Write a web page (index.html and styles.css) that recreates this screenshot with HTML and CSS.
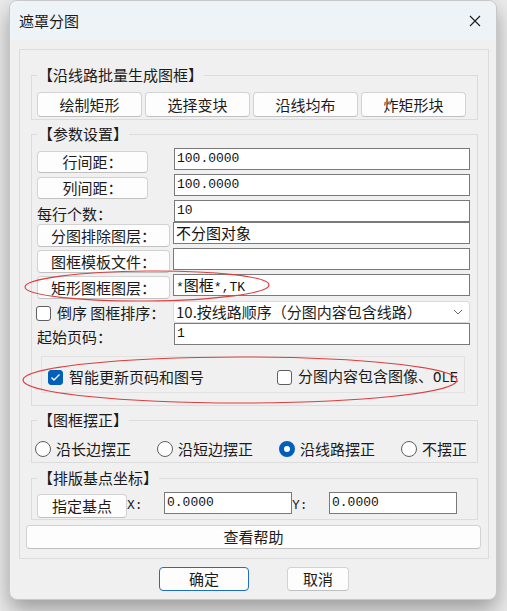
FILE: index.html
```html
<!DOCTYPE html>
<html lang="zh-CN">
<head>
    <meta charset="UTF-8">
    <title>遮罩分图</title>
    <link rel="stylesheet" href="styles.css">
</head>
<body>
    <div class="window">
        <div class="titlebar">
            <span class="title">遮罩分图</span>
            <svg class="close" width="12" height="12" viewBox="0 0 12 12">
                <path d="M1 1L11 11M11 1L1 11" stroke="#1b1b1b" stroke-width="1.1" fill="none"/>
            </svg>
        </div>

        <div class="client">
            <div class="frame">
                <div class="group g-batch">
                    <div class="group-title">【沿线路批量生成图框】</div>
                    <div class="btn-row">
                        <button class="btn">绘制矩形</button>
                        <button class="btn">选择变块</button>
                        <button class="btn">沿线均布</button>
                        <button class="btn">炸矩形块</button>
                    </div>
                </div>

                <div class="group g-params">
                    <div class="group-title">【参数设置】</div>
                    <div class="rows">
                        <div class="row r-26">
                            <button class="btn btn-label">行间距：</button>
                            <div class="field">100.0000</div>
                        </div>
                        <div class="row r-26">
                            <button class="btn btn-label">列间距：</button>
                            <div class="field">100.0000</div>
                        </div>
                        <div class="row r-22">
                            <span class="label">每行个数：</span>
                            <div class="field">10</div>
                        </div>
                        <div class="row r-26">
                            <button class="btn btn-label btn-wide">分图排除图层：</button>
                            <div class="field field-cjk narrow">不分图对象</div>
                        </div>
                        <div class="row r-26">
                            <button class="btn btn-label btn-wide">图框模板文件：</button>
                            <div class="field narrow"></div>
                        </div>
                        <div class="row r-27">
                            <button class="btn btn-label btn-wide">矩形图框图层：</button>
                            <div class="field narrow">*<span class="cjk">图框</span>*,TK</div>
                        </div>
                        <div class="row r-22">
                            <label class="check">
                                <span class="box"></span>
                                <span>倒序 图框排序：</span>
                            </label>
                            <div class="select narrow">
                                <span>10.按线路顺序（分图内容包含线路）</span>
                                <svg width="10" height="6" viewBox="0 0 10 6">
                                    <path d="M1 1L5 5L9 1" stroke="#6a6a6a" fill="none"/>
                                </svg>
                            </div>
                        </div>
                        <div class="row r-22">
                            <span class="label">起始页码：</span>
                            <div class="field">1</div>
                        </div>
                    </div>

                    <div class="subgroup">
                        <label class="check">
                            <span class="box checked">
                                <svg width="11" height="9" viewBox="0 0 11 9">
                                    <path d="M1.5 4.5L4 7L9.5 1.5" stroke="#fff" stroke-width="1.4" fill="none"/>
                                </svg>
                            </span>
                            <span>智能更新页码和图号</span>
                        </label>
                        <label class="check">
                            <span class="box"></span>
                            <span>分图内容包含图像、<span class="mono">OLE</span></span>
                        </label>
                    </div>
                </div>

                <div class="group g-align">
                    <div class="group-title">【图框摆正】</div>
                    <div class="radio-row">
                        <label class="radio"><span class="dot"></span>沿长边摆正</label>
                        <label class="radio"><span class="dot"></span>沿短边摆正</label>
                        <label class="radio"><span class="dot on"></span>沿线路摆正</label>
                        <label class="radio"><span class="dot"></span>不摆正</label>
                    </div>
                </div>

                <div class="group g-base">
                    <div class="group-title">【排版基点坐标】</div>
                    <div class="coord-row">
                        <button class="btn btn-base">指定基点</button>
                        <span class="axis">X:</span>
                        <div class="field coord">0.0000</div>
                        <span class="axis">Y:</span>
                        <div class="field coord">0.0000</div>
                    </div>
                </div>

                <button class="btn btn-help">查看帮助</button>
            </div>

            <div class="actions">
                <button class="btn btn-ok">确定</button>
                <button class="btn btn-cancel">取消</button>
            </div>
        </div>
    </div>

    <!-- hand-drawn red markers over the dialog -->
    <svg class="marks" width="507" height="611" viewBox="0 0 507 611">
        <ellipse cx="147" cy="286" rx="122" ry="15" transform="rotate(-0.5 147 286)"/>
        <ellipse cx="240" cy="380" rx="217" ry="23"/>
    </svg>
</body>
</html>
```

FILE: styles.css
```css
:root {
    --client-bg: #f0f0f0;
    --title-bg: #eef3f8;
    --line: #dcdcdc;
    --text: #1b1b1b;
    --accent: #005fb8;
}

body {
    margin: 0;
    width: 507px;
    height: 611px;
    overflow: hidden;
    background: #ececec;
    font-family: "Noto Sans CJK SC", sans-serif;
    font-size: 15px;
    color: var(--text);
    position: relative;
}

.window {
    margin-left: 9px;
    width: 488px;
    height: 600px;
    box-sizing: border-box;
    border: 1px solid #c8c8c8;
    border-radius: 8px;
    overflow: hidden;
    background: var(--client-bg);
    box-shadow: 0 10px 22px rgba(0, 0, 0, 0.35);
}

.titlebar {
    height: 39px;
    background: var(--title-bg);
    display: flex;
    align-items: center;
    justify-content: space-between;
    padding: 0 15px 0 9px;
}

.title {
    font-size: 15px;
    line-height: 20px;
}

.client {
    padding-top: 9px;
}

.frame {
    margin-left: 9px;
    width: 470px;
    height: 510px;
    box-sizing: border-box;
    border: 1px solid var(--line);
    display: flex;
    flex-direction: column;
}

.group {
    margin-left: 11px;
    width: 447px;
    box-sizing: border-box;
    border: 1px solid var(--line);
}

.group-title {
    width: fit-content;
    margin: -11px 0 0 5px;
    padding: 0 1px;
    background: var(--client-bg);
    line-height: 20px;
    height: 20px;
    white-space: nowrap;
}

.btn {
    font-family: inherit;
    font-size: 15px;
    color: var(--text);
    background: #fdfdfd;
    border: 1px solid #d2d2d2;
    border-bottom-color: #c0c0c0;
    border-radius: 4px;
    padding: 0;
    line-height: 20px;
    box-sizing: border-box;
}

/* batch group */
.g-batch {
    margin-top: 25px;
    padding-bottom: 2px;
}

.btn-row {
    margin: 7px 0 0 5px;
    display: flex;
    gap: 3px;
}

.btn-row .btn {
    width: 105px;
    height: 25px;
}

/* params group */
.g-params {
    margin-top: 14px;
    padding-bottom: 12px;
}

.rows {
    margin-top: 4px;
    padding-left: 5px;
}

.row {
    display: grid;
    grid-template-columns: 137px 296px;
    align-items: start;
}

.r-22 { height: 22px; }
.r-26 { height: 26px; }
.r-27 { height: 27px; }

.btn-label {
    width: 111px;
    height: 22px;
    margin-top: 3px;
}

.btn-wide {
    width: 133px;
    height: 23px;
    margin-top: 2px;
}

.label {
    line-height: 20px;
    margin-top: 4px;
}

.field {
    height: 22px;
    box-sizing: border-box;
    border: 1px solid #7a7a7a;
    background: #fff;
    font-family: "Liberation Mono", "Noto Sans CJK SC", monospace;
    font-size: 13px;
    line-height: 20px;
    padding-left: 2px;
    color: #111;
    white-space: nowrap;
    overflow: hidden;
}

.field .cjk,
.field-cjk {
    font-family: "Noto Sans CJK SC", sans-serif;
    font-size: 15px;
}

.narrow {
    margin-left: -1px;
}

.select {
    height: 22px;
    box-sizing: border-box;
    border: 1px solid #dadada;
    border-radius: 3px;
    background: #fff;
    display: flex;
    align-items: center;
    justify-content: space-between;
    padding: 0 6px 0 2px;
    line-height: 20px;
    white-space: nowrap;
}

.check {
    display: flex;
    align-items: center;
    gap: 6px;
    line-height: 20px;
    white-space: nowrap;
}

.box {
    width: 15px;
    height: 15px;
    box-sizing: border-box;
    border: 1px solid #5f5f5f;
    border-radius: 3px;
    background: #fff;
    display: flex;
    align-items: center;
    justify-content: center;
    flex-shrink: 0;
}

.box.checked {
    background: var(--accent);
    border-color: var(--accent);
}

.row .check {
    margin: 2px 0 0 -1px;
}

.subgroup {
    margin: 11px 0 0 9px;
    width: 424px;
    height: 37px;
    box-sizing: border-box;
    border: 1px solid #e2e2e2;
    display: flex;
    align-items: center;
    padding: 5px 0 0 6px;
}

.subgroup .check:first-child {
    width: 229px;
}

.mono {
    font-family: "Liberation Mono", monospace;
    font-size: 14px;
}

/* align group */
.g-align {
    margin-top: 14px;
    padding-bottom: 3px;
}

.radio-row {
    margin: 9px 0 0 3px;
    display: grid;
    grid-template-columns: repeat(4, 122px);
}

.radio {
    display: flex;
    align-items: center;
    gap: 5px;
    line-height: 20px;
    white-space: nowrap;
}

.dot {
    width: 16px;
    height: 16px;
    box-sizing: border-box;
    border-radius: 50%;
    border: 1px solid #5f5f5f;
    background: #fff;
    flex-shrink: 0;
}

.dot.on {
    border: 5px solid var(--accent);
}

/* base point group */
.g-base {
    margin-top: 15px;
    padding-bottom: 2px;
}

.coord-row {
    margin: 4px 0 0 5px;
    display: flex;
    align-items: flex-start;
    height: 25px;
}

.btn-base {
    width: 90px;
    height: 24px;
    margin-top: 2px;
}

.axis {
    font-family: "Liberation Mono", monospace;
    font-size: 13px;
    line-height: 20px;
    margin-top: 4px;
    width: 37px;
}

.coord {
    width: 128px;
}

.btn-help {
    margin: 5px 0 0 6px;
    width: 455px;
    height: 24px;
}

.actions {
    display: flex;
    margin: 8px 0 0 149px;
    gap: 38px;
}

.btn-ok {
    width: 90px;
    height: 24px;
    border: 1px solid #1c6fbf;
}

.btn-cancel {
    width: 62px;
    height: 24px;
}

.marks {
    position: absolute;
    left: 0;
    top: 0;
    pointer-events: none;
}

.marks ellipse {
    fill: none;
    stroke: #de3d3d;
    stroke-width: 1.1;
}
```
